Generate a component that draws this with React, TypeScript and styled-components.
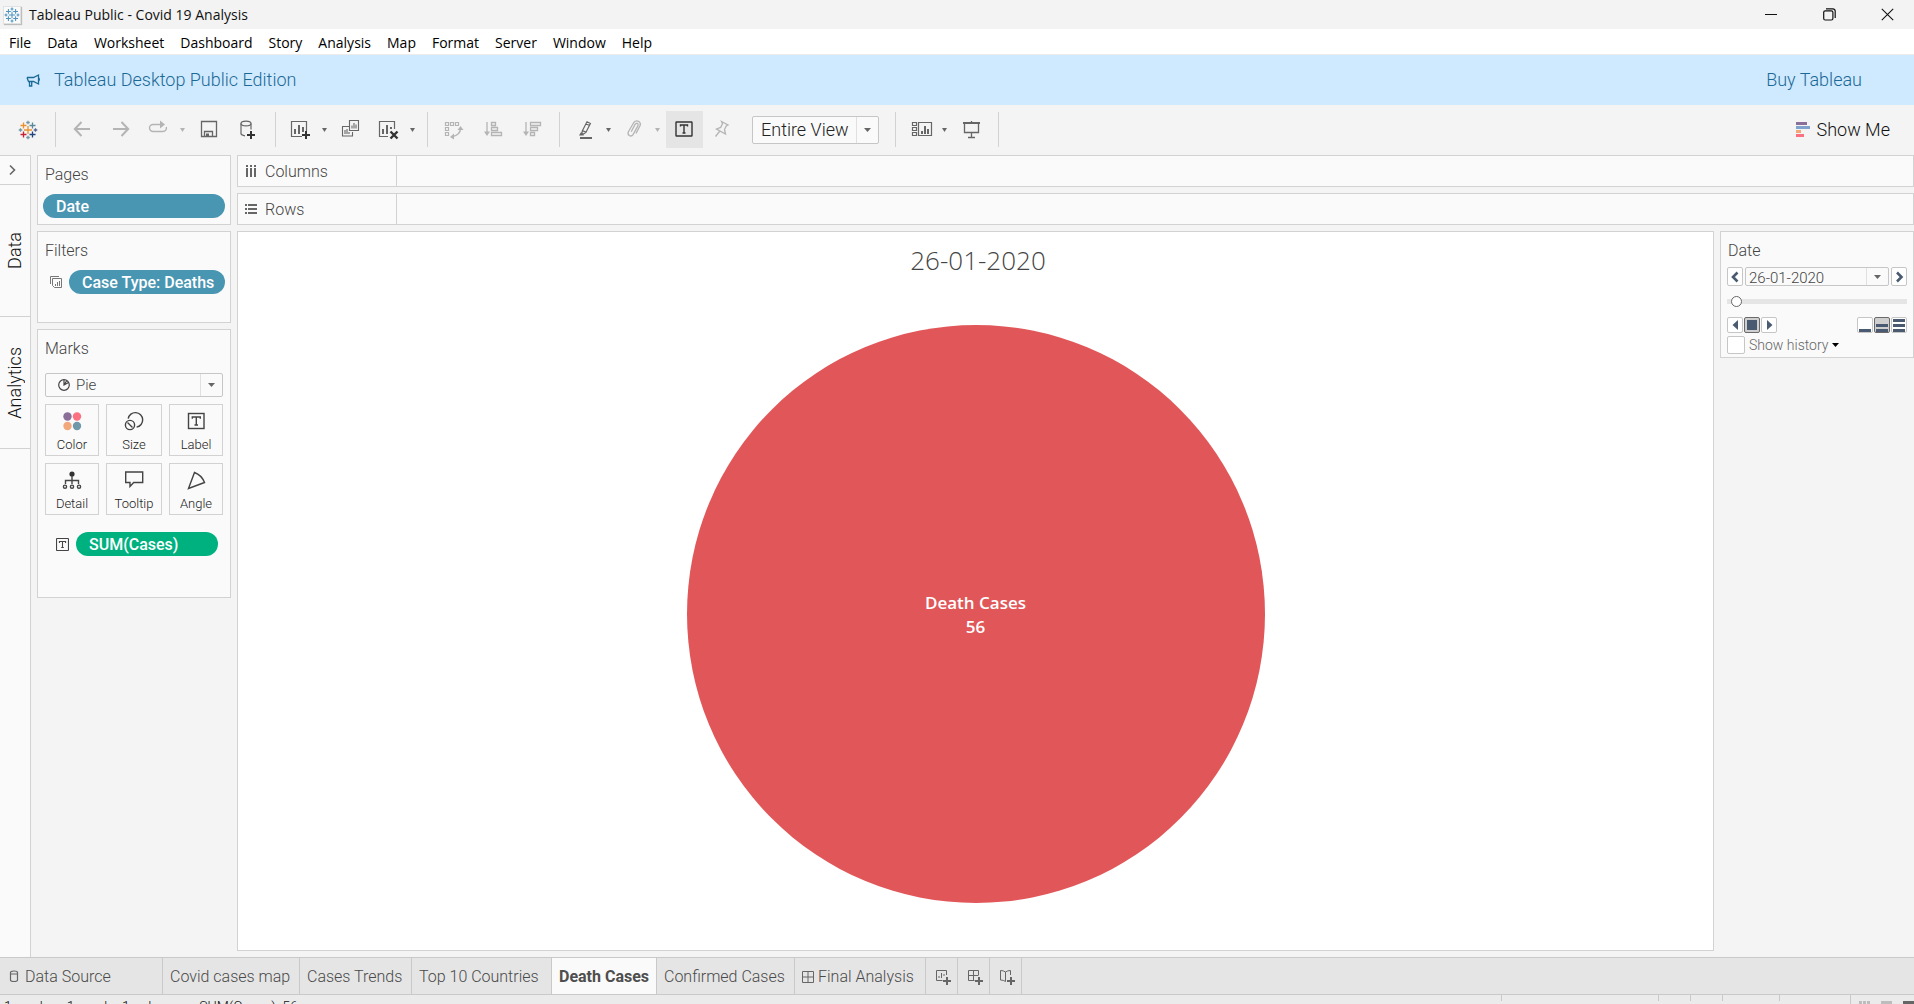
import React from "react";
import styled, { createGlobalStyle, css } from "styled-components";

const UI = `Roboto, "Open Sans", sans-serif`;
const SYSTEM = `"Open Sans", "Noto Sans", sans-serif`;
const LINE = "#d2d2d2";
const INK = "#666666";
const FAINT = "#b4b4b4";

const GlobalStyle = createGlobalStyle`
  *, *::before, *::after { box-sizing: border-box; }
  body { margin: 0; }
  button, select, input { font: inherit; color: inherit; margin: 0; }
  svg { display: block; flex: none; }
`;

const Window = styled.div`
  display: flex;
  flex-direction: column;
  height: 100vh;
  overflow: hidden;
  background: #f4f4f4;
  color: #444;
  font: 300 16px/20px ${UI};
`;

/* Window chrome */
const TitleBar = styled.header`
  display: flex;
  align-items: center;
  gap: 5px;
  height: 29px;
  flex: none;
  padding-left: 3px;
  background: #f3f3f3;
  color: #111;
  font: 400 14px/20px ${SYSTEM};
`;
const AppBadge = styled.span`
  display: grid;
  place-items: center;
  width: 18px;
  height: 18px;
  background: #fafafa;
  border: 1px solid #e2e2e2;
  box-shadow: 1px 1px 1px #bdbdbd;
`;
const AppTitle = styled.h1`
  flex: 1;
  margin: 0 0 0 3px;
  font: inherit;
`;
const WindowButton = styled.button`
  display: grid;
  place-items: center;
  width: 53px;
  height: 29px;
  padding: 0;
  border: 0;
  background: none;
  color: #111;
`;
const MenuBar = styled.nav`
  display: flex;
  align-items: center;
  height: 26px;
  flex: none;
  padding: 2px 0 0 1px;
  background: #fff;
  border-bottom: 1px solid #ececec;
`;
const MenuButton = styled.button`
  padding: 0 8px;
  border: 0;
  background: none;
  color: #000;
  font: 400 14px/22px ${SYSTEM};
`;
const Banner = styled.div`
  display: flex;
  align-items: center;
  height: 50px;
  flex: none;
  padding: 0 52px 0 26px;
  background: #cfe9ff;
  color: #1b6a96;
  font-size: 18px;
`;
const BannerText = styled.span`
  flex: 1;
  margin-left: 13px;
`;
const BannerLink = styled.a`
  color: inherit;
  text-decoration: none;
`;

/* Toolbar */
const Toolbar = styled.div`
  display: flex;
  align-items: center;
  gap: 2px;
  height: 50px;
  flex: none;
  padding: 0 24px 1px 10px;
`;
const ToolButton = styled.button<{ $split?: boolean; $active?: boolean }>`
  display: flex;
  align-items: center;
  width: ${(p) => (p.$split ? 47 : 37)}px;
  height: 37px;
  padding: 0 0 0 6px;
  border: 0;
  background: ${(p) => (p.$active ? "#e5e5e5" : "none")};
`;
const Separator = styled.span`
  width: 1px;
  height: 35px;
  margin: 0 6px;
  background: ${LINE};
`;
const SelectBox = styled.div<{ $size?: "large" }>`
  display: flex;
  align-items: center;
  height: 20px;
  border: 1px solid #c6c6c6;
  border-radius: 2px;
  background: #fafafa;
  ${(p) =>
    p.$size === "large" &&
    css`
      width: 127px;
      height: 28px;
      margin: 0 8px;
      font-size: 18px;
      color: #222;
    `}
`;
const Select = styled.select<{ $inset?: number }>`
  flex: 1;
  min-width: 0;
  height: 100%;
  padding: 0 0 0 ${(p) => p.$inset ?? 8}px;
  border: 0;
  background: none;
  appearance: none;
  outline: 0;
`;
const SelectArrow = styled.span`
  display: grid;
  place-items: center;
  width: 22px;
  height: 100%;
  border-left: 1px solid #e0e0e0;
  pointer-events: none;
`;
const ShowMe = styled.button`
  display: flex;
  align-items: center;
  gap: 6px;
  margin-left: auto;
  padding: 0;
  border: 0;
  background: none;
  color: #111;
  font-size: 18px;
`;

/* Workspace */
const Workspace = styled.div`
  display: flex;
  flex: 1;
  min-height: 0;
  gap: 6px;
`;
const Rail = styled.aside`
  display: flex;
  flex-direction: column;
  width: 31px;
  flex: none;
  background: #fafafa;
  border: 1px solid ${LINE};
  border-width: 1px 1px 0 0;
`;
const RailButton = styled.button<{ $tall?: boolean }>`
  display: grid;
  place-items: center;
  height: ${(p) => (p.$tall ? 132 : 29)}px;
  padding: 0;
  border: 0;
  border-bottom: 1px solid ${LINE};
  background: none;
  color: #111;
  font-size: 18px;
`;
const VerticalLabel = styled.span`
  writing-mode: vertical-rl;
  transform: rotate(180deg);
`;
const Shelves = styled.div`
  display: flex;
  flex-direction: column;
  gap: 6px;
  width: 194px;
  flex: none;
`;
const Card = styled.section<{ $bottom?: number }>`
  padding: 9px 5px ${(p) => p.$bottom ?? 6}px;
  background: #fafafa;
  border: 1px solid ${LINE};
`;
const CardTitle = styled.h2`
  margin: 0 0 9px;
  padding-left: 2px;
  font: inherit;
`;
const PillRow = styled.div<{ $inset?: number; $end?: number }>`
  display: flex;
  align-items: center;
  gap: 7px;
  padding: 0 ${(p) => p.$end ?? 0}px 0 ${(p) => p.$inset ?? 0}px;
`;
const Pill = styled.button<{ $measure?: boolean }>`
  flex: 1;
  height: 24px;
  padding: 2px 8px 0 13px;
  border: 0;
  border-radius: 12px;
  background: ${(p) => (p.$measure ? "#00b180" : "#4996b2")};
  color: #fff;
  font-weight: 500;
  text-align: left;
  white-space: nowrap;
`;
const MarksBody = styled.div`
  display: flex;
  flex-direction: column;
  gap: 7px;
  padding: 5px 2px 17px;
`;
const MarkSelect = styled(SelectBox)`
  height: 24px;
  padding-left: 12px;
  font-size: 15px;
`;
const MarkGrid = styled.div`
  display: grid;
  grid-template-columns: 54px 1fr 54px;
  gap: 7px;
`;
const MarkButton = styled.button`
  display: flex;
  flex-direction: column;
  align-items: center;
  justify-content: space-between;
  height: 52px;
  padding: 4px 0 2px;
  border: 1px solid ${LINE};
  background: #fafafa;
  color: #222;
  font-size: 13px;
  line-height: 16px;
`;
const Main = styled.main`
  display: flex;
  flex-direction: column;
  flex: 1;
  gap: 6px;
  min-width: 0;
`;
const Shelf = styled.div`
  display: flex;
  height: 32px;
  flex: none;
  background: #fafafa;
  border: 1px solid ${LINE};
`;
const ShelfLabel = styled.div`
  display: flex;
  align-items: center;
  gap: 8px;
  width: 159px;
  padding-left: 7px;
  border-right: 1px solid ${LINE};
`;
const ShelfName = styled.span`
  padding-top: 2px;
`;
const ViewRow = styled.div`
  display: flex;
  flex: 1;
  gap: 6px;
  min-height: 0;
  padding-bottom: 6px;
`;
const Canvas = styled.section`
  display: flex;
  flex-direction: column;
  flex: 1;
  background: #fff;
  border: 1px solid ${LINE};
`;
const SheetTitle = styled.h2`
  margin: 0;
  padding: 12px 0 2px 5px;
  font: 300 26px/32px "Open Sans", sans-serif;
  text-align: center;
  color: #444;
`;
const Chart = styled.div`
  display: flex;
  justify-content: center;
  flex: 1;
  min-height: 0;
  padding: 47px 0;
`;
const Pie = styled.div`
  display: flex;
  flex-direction: column;
  align-items: center;
  justify-content: center;
  height: 100%;
  padding-top: 2px;
  aspect-ratio: 1;
  border-radius: 50%;
  background: #e15759;
  color: #fff;
  font: 600 17px/24px "Open Sans", sans-serif;
`;

/* Date control */
const DateCard = styled(Card)`
  display: flex;
  flex-direction: column;
  align-self: flex-start;
  width: 194px;
  padding: 9px 6px 3px;
`;
const DateHeading = styled.h2`
  margin: 0 0 6px;
  padding-left: 1px;
  font: inherit;
`;
const StepRow = styled.div`
  display: flex;
  gap: 2px;
  height: 19px;
  font-size: 15px;
`;
const DateSelect = styled(SelectBox)`
  flex: 1;
  height: 19px;
`;
const SmallButton = styled.button<{ $pressed?: boolean }>`
  display: grid;
  place-items: center;
  width: 16px;
  height: 100%;
  padding: 0;
  border: 1px solid ${(p) => (p.$pressed ? "#6a6a6a" : "#c6c6c6")};
  border-radius: 2px;
  background: ${(p) => (p.$pressed ? "#cfcfcf" : "#fff")};
`;
const Slider = styled.input`
  width: 100%;
  height: 11px;
  margin: 10px 0;
  padding: 0 4px;
  appearance: none;
  background: linear-gradient(#e5e5e5, #e5e5e5) center / 100% 5px no-repeat;
  &::-webkit-slider-thumb {
    appearance: none;
    width: 11px;
    height: 11px;
    border: 1px solid #666;
    border-radius: 50%;
    background: #fff;
  }
`;
const PlayRow = styled.div`
  display: flex;
  justify-content: space-between;
  height: 16px;
`;
const ButtonGroup = styled.div`
  display: flex;
  gap: 1px;
`;
const HistoryRow = styled.div`
  display: flex;
  align-items: center;
  gap: 4px;
  margin-top: 3px;
  color: #666;
  font-size: 14px;
  line-height: 18px;
`;
const CheckBox = styled.input`
  width: 18px;
  height: 18px;
  appearance: none;
  border: 1px solid #c6c6c6;
  border-radius: 2px;
  background: #fff;
`;

/* Sheet tabs and status */
const TabBar = styled.nav`
  display: flex;
  height: 38px;
  flex: none;
  background: #e5e5e5;
  border: 1px solid #c9c9c9;
  border-width: 1px 0;
`;
const Tab = styled.button<{ $width: number; $active?: boolean }>`
  display: flex;
  align-items: center;
  gap: 4px;
  width: ${(p) => p.$width}px;
  padding: 2px 0 0 7px;
  border: 0;
  border-right: 1px solid #c9c9c9;
  background: ${(p) => (p.$active ? "#fafafa" : "none")};
  color: ${(p) => (p.$active ? "#4e4e4e" : "#4a4a4a")};
  font-weight: ${(p) => (p.$active ? 700 : 300)};
  white-space: nowrap;
`;
const StatusBar = styled.footer`
  display: flex;
  align-items: flex-start;
  height: 9px;
  flex: none;
  overflow: hidden;
  background: #ebebeb;
  color: #111;
  font-size: 14px;
  line-height: 16px;
`;
const StatusText = styled.span`
  padding: 4px 0 0 4px;
  margin-right: 16px;
`;
const StatusCell = styled.span<{ $width: number }>`
  display: flex;
  justify-content: space-between;
  width: ${(p) => p.$width}px;
  padding: 6px 0 0 8px;
  border-left: 1px solid #c9c9c9;
`;
const StatusSpacer = styled.span`
  flex: 1;
`;

/* Drawings */
type IconProps = { size?: number; color?: string; width?: number; children: React.ReactNode };
const Icon = ({ size = 25, color = INK, width = 1, children }: IconProps) => (
  <svg width={size} height={size} viewBox={`0 0 ${size} ${size}`} fill="none" stroke={color} strokeWidth={width} aria-hidden="true">
    {children}
  </svg>
);
const Caret = ({ color = INK, w = 5 }: { color?: string; w?: number }) => (
  <svg width={w} height="4" viewBox="0 0 6 4" preserveAspectRatio="none" aria-hidden="true">
    <path d="M0 0h6L3 4z" fill={color} />
  </svg>
);
const SplitCaret = styled.span`
  margin-left: 7px;
`;

const LOGO: [number, number, number, string][] = [
  [12, 12, 4, "#eb912c"],
  [7.5, 7.5, 3, "#eb912c"],
  [16.5, 7.5, 3, "#5b879b"],
  [7.5, 16.5, 3, "#c72035"],
  [16.5, 16.5, 3, "#1f447e"],
  [12, 4.5, 1.8, "#7199a6"],
  [12, 19.5, 1.8, "#7199a6"],
  [4.5, 12, 1.8, "#7199a6"],
  [19.5, 12, 1.8, "#5c6692"],
];
const Logo = ({ size, mono }: { size: number; mono?: boolean }) => (
  <svg width={size} height={size} viewBox={mono ? "2 2 20 20" : "0 0 24 24"} fill="none" aria-hidden="true">
    {LOGO.map(([x, y, r, c], i) => (
      <path key={i} d={`M${x - r} ${y}h${2 * r}M${x} ${y - r}v${2 * r}`} stroke={mono ? "#4c93bd" : c} strokeWidth="1.3" />
    ))}
  </svg>
);
const Plus = ({ x, y }: { x: number; y: number }) => (
  <path d={`M${x - 4} ${y}h8M${x} ${y - 4}v8`} stroke="#333" strokeWidth="2" />
);
const LabelGlyph = ({ size = 17, color = "#444" }: { size?: number; color?: string }) => (
  <svg width={size} height={size} viewBox="0 0 17 17" fill="none" stroke={color} strokeWidth="1.4" aria-hidden="true">
    <rect x=".7" y=".7" width="15.6" height="15.6" rx=".6" />
    <path d="M4.5 6.5V4.5h8v2M8.5 4.5v8M6.8 12.5h3.4" />
  </svg>
);

const Tool = ({ label, caret, children }: { label: string; caret?: string; children: React.ReactNode }) => (
  <ToolButton aria-label={label} $split={!!caret}>
    {children}
    {caret && (
      <SplitCaret>
        <Caret color={caret} />
      </SplitCaret>
    )}
  </ToolButton>
);

const MENUS = ["File", "Data", "Worksheet", "Dashboard", "Story", "Analysis", "Map", "Format", "Server", "Window", "Help"];

const MARKS: [string, React.ReactNode][] = [
  ["Color", (
    <Icon key="c" size={24}>
      <g stroke="none">
        <circle cx="7.5" cy="7.5" r="4.2" fill="#8a7099" />
        <circle cx="17" cy="7.5" r="4.2" fill="#fb7182" />
        <circle cx="7.5" cy="17" r="4.2" fill="#f3a87c" />
        <circle cx="17" cy="17" r="4.2" fill="#6f99a8" />
      </g>
    </Icon>
  )],
  ["Size", (
    <Icon key="s" size={24} color="#444" width={1.4}>
      <circle cx="8" cy="16" r="4.6" />
      <path d="M5.5 13.5l5 5M6.2 9.6A7.3 7.3 0 1 1 14.6 18.1" />
    </Icon>
  )],
  ["Label", (
    <Icon key="l" size={24} color="#444" width={1.4}>
      <rect x="4.5" y="4.5" width="15.5" height="15" />
      <path d="M8.3 9.8V8h8v1.8M12.3 8v8M10.5 16h3.5" />
    </Icon>
  )],
  ["Detail", (
    <Icon key="d" size={24} color="#444" width={1.4}>
      <circle cx="12" cy="6" r="2.6" fill="#333" stroke="none" />
      <path d="M12 8v8M5.5 16v-3.5h13V16" />
      <circle cx="5" cy="18.7" r="1.6" />
      <circle cx="12" cy="18.7" r="1.6" />
      <circle cx="19" cy="18.7" r="1.6" />
    </Icon>
  )],
  ["Tooltip", (
    <Icon key="t" size={24} color="#444" width={1.4}>
      <path d="M3.7 4h17v10.5h-9L8 18.5v-4H3.7z" />
    </Icon>
  )],
  ["Angle", (
    <Icon key="a" size={24} color="#444" width={1.4}>
      <path d="M4.5 20.5L10.5 4.5Q17.5 7 20.5 14.5z" />
    </Icon>
  )],
];

const SHEETS: { name: string; width: number; active?: boolean; icon?: React.ReactNode }[] = [
  { name: "Covid cases map", width: 137 },
  { name: "Cases Trends", width: 112 },
  { name: "Top 10 Countries", width: 140 },
  { name: "Death Cases", width: 105, active: true },
  { name: "Confirmed Cases", width: 138 },
  { name: "Final Analysis", width: 131, icon: <Icon size={12}><path d="M.5.5h11v11H.5zM6 .5v11M.5 6h11" /></Icon> },
];

export default function App() {
  return (
    <Window>
      <GlobalStyle />
      <TitleBar>
        <AppBadge><Logo size={16} mono /></AppBadge>
        <AppTitle>Tableau Public - Covid 19 Analysis</AppTitle>
        <WindowButton aria-label="Minimize"><Icon size={13} color="#111"><path d="M0 6.5h12" /></Icon></WindowButton>
        <WindowButton aria-label="Restore">
          <Icon size={13} color="#111" width={1.2}>
            <rect x=".7" y="2.8" width="9.2" height="9.2" rx="1.5" />
            <path d="M3 .8h6.8A2.4 2.4 0 0 1 12.2 3v7" />
          </Icon>
        </WindowButton>
        <WindowButton aria-label="Close"><Icon size={13} color="#111" width={1.1}><path d="M.8.8l11.4 11.4M12.2.8L.8 12.2" /></Icon></WindowButton>
      </TitleBar>

      <MenuBar>
        {MENUS.map((m) => <MenuButton key={m}>{m}</MenuButton>)}
      </MenuBar>

      <Banner>
        <Icon size={15} color="#1b6a96" width={1.3}>
          <path d="M1 4.5h6.5L12.5 2v9L7.5 8.5H2.5L1 4.5M3.5 8.5V13h2.2V8.5M12.5 4.8q1.6 1.7 0 3.4" />
        </Icon>
        <BannerText>Tableau Desktop Public Edition</BannerText>
        <BannerLink href="#buy">Buy Tableau</BannerLink>
      </Banner>

      <Toolbar>
        <Tool label="Start page"><Logo size={24} /></Tool>
        <Separator />
        <Tool label="Undo"><Icon color={FAINT} width={2}><path d="M20 12H5M11.5 5L4.8 12l6.7 7" /></Icon></Tool>
        <Tool label="Redo"><Icon color={FAINT} width={2}><path d="M4 12h15M12.5 5l6.7 7-6.7 7" /></Icon></Tool>
        <Tool label="Replay" caret={FAINT}>
          <Icon color={FAINT} width={1.4}>
            <path d="M13 7.5H5a3.5 3.5 0 0 0 0 7h10a3.5 3.5 0 0 0 3.3-4.5" />
            <path d="M12 3.5l5 4-5 4z" fill={FAINT} stroke="none" />
          </Icon>
        </Tool>
        <Tool label="Save"><Icon width={1.3}><path d="M4.5 4.5h15v15h-15zM7.5 19.5v-5h8v5" /><path d="M9 16.5h3v3H9z" fill={INK} stroke="none" /></Icon></Tool>
        <Tool label="New data source">
          <Icon width={1.2}>
            <ellipse cx="10" cy="6.5" rx="5" ry="2.4" />
            <path d="M5 6.5v10.3q.6 1.6 4 2M15 6.5v6" />
            <Plus x={15} y={18} />
          </Icon>
        </Tool>
        <Separator />
        <Tool label="New worksheet" caret={INK}>
          <Icon width={1.2}>
            <path d="M16.5 14V4.5h-15v15H12" />
            <path d="M5 17v-5M9 17V8M13 15v-5" strokeWidth="2" />
            <Plus x={16} y={18} />
          </Icon>
        </Tool>
        <Tool label="Duplicate">
          <Icon width={1.1}>
            <path d="M10.5 3.5h9v10h-9zM10 9.5H3.5V19h10v-4" />
            <path d="M13 11.5v-3M15 11.5V6M17 11.5v-4M6 17v-4M8 17v-5M10 17v-2" />
          </Icon>
        </Tool>
        <Tool label="Clear sheet" caret={INK}>
          <Icon width={1.2}>
            <path d="M16.5 12V4.5h-15v15H10" />
            <path d="M5 17v-5M9 17V8M13 12v-2" strokeWidth="2" />
            <path d="M12.5 14.5l7 7M19.5 14.5l-7 7" stroke="#333" strokeWidth="2.4" />
          </Icon>
        </Tool>
        <Separator />
        <Tool label="Swap rows and columns">
          <Icon color={FAINT} width={1.2}>
            <path d="M3.5 5.5h3v3h-3zM8.5 5.5h3v3h-3zM13.5 5.5h3v3h-3zM3.5 10.5h3v3h-3zM3.5 15.5h3v3h-3z" />
            <path d="M18.5 12q-.5 6-8 7.5" strokeWidth="1.5" />
            <path d="M15.5 13l3-4 3 4zM12 16.5L8 20l4 2.5z" fill={FAINT} stroke="none" />
          </Icon>
        </Tool>
        <Tool label="Sort ascending">
          <Icon color={FAINT} width={1.3}>
            <path d="M6 5v12M10.5 5.5h4v3h-4zM10.5 10.5h6v3h-6zM10.5 15.5h10v3h-10z" />
            <path d="M3 14.5h6L6 19z" fill={FAINT} stroke="none" />
          </Icon>
        </Tool>
        <Tool label="Sort descending">
          <Icon color={FAINT} width={1.3}>
            <path d="M6 5v12M10.5 5.5h10v3h-10zM10.5 10.5h7v3h-7zM10.5 15.5h4v3h-4z" />
            <path d="M3 14.5h6L6 19z" fill={FAINT} stroke="none" />
          </Icon>
        </Tool>
        <Separator />
        <Tool label="Highlight" caret={INK}>
          <Icon width={1.2}>
            <path d="M8.5 13.5L13 4.8l3.4 1.7-4.4 8.8zM8.5 13.5l-.7 3 1.3.8 2.9-2M12 6.8l3.4 1.7" />
            <path d="M7.2 16l1.5 2H6z" fill={INK} />
            <path d="M6 21h12" strokeWidth="2" />
          </Icon>
        </Tool>
        <Tool label="Group members" caret={FAINT}>
          <Icon color={FAINT} width={1.3}>
            <path d="M8.2 14.8l4-7.6q1.3-1.7 2.7-.3.6.8 0 2l-4.7 8.5q-1.7 2.4-3.9 1.1-2-1.5-.9-3.8L10.8 5.5q2-2.5 4.8-1.2 2.7 1.8 1.4 4.5l-4 7.6" />
          </Icon>
        </Tool>
        <ToolButton $active aria-label="Show mark labels" aria-pressed="true">
          <Icon color="#333" width={1.4}>
            <rect x="4" y="5" width="16" height="14" rx=".5" />
            <path d="M8.5 9.5V8h7v1.5M12 8v8M10.5 16h3" />
          </Icon>
        </ToolButton>
        <Tool label="Fix axes">
          <Icon color={FAINT} width={1.3}>
            <path d="M10.500 4.500l6.500 3.500-1.800.9-1.700 3.600 1 4.500-9-5 4.200-1.600 1.800-3.600zM8.500 14.500L4.500 19.500" />
          </Icon>
        </Tool>
        <SelectBox $size="large">
          <Select aria-label="Fit"><option>Entire View</option></Select>
          <SelectArrow><Caret w={7} /></SelectArrow>
        </SelectBox>
        <Separator />
        <Tool label="Show or hide cards" caret={INK}>
          <Icon width={1.2}>
            <path d="M2.5 5.5h4v3h-4zM2.5 10.5h4v3h-4zM2.5 15.5h4v3h-4zM8.5 5.5h13v13h-13z" />
            <path d="M12 17v-3M15 17V9M18 17v-5" strokeWidth="2" />
          </Icon>
        </Tool>
        <Tool label="Presentation mode">
          <Icon width={1.3}>
            <path d="M5.5 6v9.5h14V6M12.5 15.5V20M9 20.5h7M12.5 4v2" />
            <path d="M4 6h17" strokeWidth="2" />
          </Icon>
        </Tool>
        <Separator />
        <ShowMe>
          <Icon size={15}>
            <g stroke="none">
              <path d="M0 0h11v3H0z" fill="#8a7099" />
              <path d="M0 4h14v3H0z" fill="#7fa3cc" />
              <path d="M0 8h5v3H0z" fill="#f3a87c" />
              <path d="M0 12h8v3H0z" fill="#fb7182" />
            </g>
          </Icon>
          Show Me
        </ShowMe>
      </Toolbar>

      <Workspace>
        <Rail>
          <RailButton aria-label="Expand pane"><Icon size={26} width={1.6}><path d="M8 8.5l4.5 4.5L8 17.5" /></Icon></RailButton>
          <RailButton $tall><VerticalLabel>Data</VerticalLabel></RailButton>
          <RailButton $tall><VerticalLabel>Analytics</VerticalLabel></RailButton>
        </Rail>

        <Shelves>
          <Card>
            <CardTitle>Pages</CardTitle>
            <PillRow><Pill>Date</Pill></PillRow>
          </Card>
          <Card $bottom={28}>
            <CardTitle>Filters</CardTitle>
            <PillRow $inset={7}>
              <Icon size={12} color="#777">
                <path d="M2.5 2.5h9v9h-7l-2-2zM.5 8V.5H9M5.5 10V8M7.5 10V6M9.5 10V5" />
              </Icon>
              <Pill>Case Type: Deaths</Pill>
            </PillRow>
          </Card>
          <Card $bottom={41}>
            <CardTitle>Marks</CardTitle>
            <MarksBody>
              <MarkSelect>
                <Icon size={12} color="#444" width={1.2}><circle cx="6" cy="6" r="5.3" /><path d="M6 .7V6l4.5-2.5M6 6l2.5-4" /></Icon>
                <Select aria-label="Mark type" $inset={6}><option>Pie</option></Select>
                <SelectArrow><Caret w={7} /></SelectArrow>
              </MarkSelect>
              <MarkGrid>
                {MARKS.map(([name, icon]) => (
                  <MarkButton key={name}>{icon}{name}</MarkButton>
                ))}
              </MarkGrid>
            </MarksBody>
            <PillRow $inset={13} $end={7}>
              <LabelGlyph size={13} />
              <Pill $measure>SUM(Cases)</Pill>
            </PillRow>
          </Card>
        </Shelves>

        <Main>
          <Shelf>
            <ShelfLabel>
              <Icon size={12} width={2}><path d="M2 0v2M6 0v2M10 0v2M2 3v9M6 3v9M10 3v9" /></Icon>
              <ShelfName>Columns</ShelfName>
            </ShelfLabel>
          </Shelf>
          <Shelf>
            <ShelfLabel>
              <Icon size={12} width={2}><path d="M0 2h2M0 6h2M0 10h2M3 2h9M3 6h9M3 10h9" /></Icon>
              <ShelfName>Rows</ShelfName>
            </ShelfLabel>
          </Shelf>
          <ViewRow>
            <Canvas>
              <SheetTitle>26-01-2020</SheetTitle>
              <Chart>
                <Pie>
                  <span>Death Cases</span>
                  <span>56</span>
                </Pie>
              </Chart>
            </Canvas>
            <DateCard>
              <DateHeading>Date</DateHeading>
              <StepRow>
                <SmallButton aria-label="Previous date"><Icon size={12} color="#4a5a70" width={2.6}><path d="M8.5 1.5L4 6l4.5 4.5" /></Icon></SmallButton>
                <DateSelect>
                  <Select aria-label="Date" $inset={3}><option>26-01-2020</option></Select>
                  <SelectArrow><Caret w={7} /></SelectArrow>
                </DateSelect>
                <SmallButton aria-label="Next date"><Icon size={12} color="#4a5a70" width={2.6}><path d="M4 1.5L8.5 6 4 10.5" /></Icon></SmallButton>
              </StepRow>
              <Slider type="range" aria-label="Date position" min={0} max={100} defaultValue={0} />
              <PlayRow>
                <ButtonGroup>
                  <SmallButton aria-label="Play backward"><Icon size={12}><path d="M9 1v10L3.5 6z" fill="#4a5a70" stroke="none" /></Icon></SmallButton>
                  <SmallButton $pressed aria-label="Stop"><Icon size={12}><path d="M1 1h10v10H1z" fill="#4a5a70" stroke="none" /></Icon></SmallButton>
                  <SmallButton aria-label="Play forward"><Icon size={12}><path d="M4 1v10l5.5-5z" fill="#4a5a70" stroke="none" /></Icon></SmallButton>
                </ButtonGroup>
                <ButtonGroup>
                  <SmallButton aria-label="Slow"><Icon size={14} color="#4a5a70" width={3}><path d="M1 12.5h12" /></Icon></SmallButton>
                  <SmallButton $pressed aria-label="Normal"><Icon size={14} color="#4a5a70" width={3}><path d="M1 7.5h12M1 12.5h12" /></Icon></SmallButton>
                  <SmallButton aria-label="Fast"><Icon size={14} color="#4a5a70" width={3}><path d="M1 2.5h12M1 7.5h12M1 12.5h12" /></Icon></SmallButton>
                </ButtonGroup>
              </PlayRow>
              <HistoryRow>
                <CheckBox type="checkbox" id="history" />
                <label htmlFor="history">Show history</label>
                <Caret color="#000" w={7} />
              </HistoryRow>
            </DateCard>
          </ViewRow>
        </Main>
      </Workspace>

      <TabBar>
        <Tab $width={163}>
          <Icon size={14} width={1.2}><path d="M3.5 2.500q0-1.500 3.500-1.500t3.500 1.500v7.500q0 1.500-3.500 1.500t-3.500-1.500zM3.500 4h7" /></Icon>
          Data Source
        </Tab>
        {SHEETS.map((s) => (
          <Tab key={s.name} $width={s.width} $active={s.active}>{s.icon}{s.name}</Tab>
        ))}
        <Tab $width={32} aria-label="New worksheet"><Icon size={20}><path d="M13.5 8V3.5h-10v10h6M6 11V9M8.5 11V6M11 9V7" /><path d="M10 14h8M14 10v8" strokeWidth="2" /></Icon></Tab>
        <Tab $width={32} aria-label="New dashboard"><Icon size={20}><path d="M13.5 8V3.5h-10v10h6M8.5 3.5v10M3.5 8.5h10" /><path d="M10 14h8M14 10v8" strokeWidth="2" /></Icon></Tab>
        <Tab $width={32} aria-label="New story"><Icon size={20}><path d="M13.5 8V3.5q-3 0-5 1.5-2-1.5-5-1.5V13q3 0 5 1.5V5" /><path d="M10 14h8M14 10v8" strokeWidth="2" /></Icon></Tab>
      </TabBar>

      <StatusBar>
        <StatusText>1 mark</StatusText>
        <StatusText>1 row by 1 column</StatusText>
        <StatusText>SUM(Cases): 56</StatusText>
        <StatusSpacer />
        <StatusCell $width={157} />
        <StatusCell $width={32} />
        <StatusCell $width={32} />
        <StatusCell $width={57} />
        <StatusCell $width={71} />
        <StatusCell $width={64}>
          <Icon size={11} color="#bdbdbd" width={3}><path d="M1.5 0v11M5.5 0v11M9.5 0v11" /></Icon>
          <Icon size={11}><path d="M0 0h11v11H0z" fill="#bdbdbd" stroke="none" /></Icon>
          <Icon size={11}><path d="M0 0h11v11H0z" fill="#666" stroke="none" /></Icon>
        </StatusCell>
      </StatusBar>
    </Window>
  );
}
